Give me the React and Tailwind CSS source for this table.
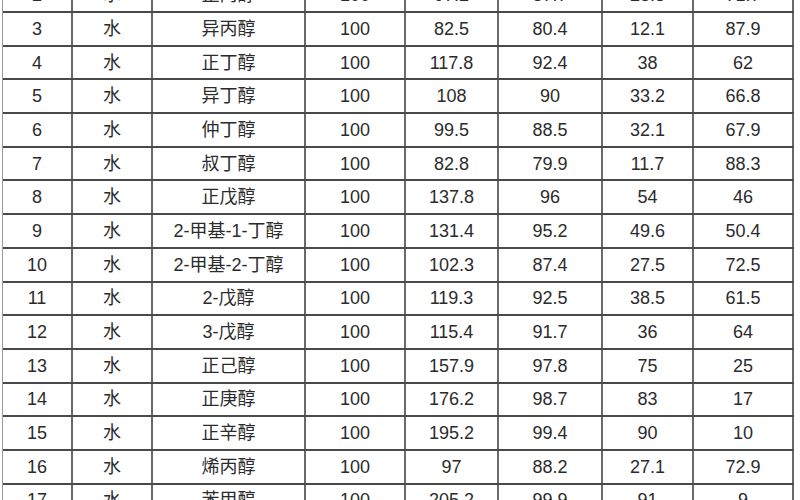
import React from 'react';

// Water azeotrope table: 水 + alcohol, columns: #, component A, component B, ... values
const ROWS = [
  ['2', '水', '正丙醇', '100', '97.2', '87.7', '28.3', '71.7'],
  ['3', '水', '异丙醇', '100', '82.5', '80.4', '12.1', '87.9'],
  ['4', '水', '正丁醇', '100', '117.8', '92.4', '38', '62'],
  ['5', '水', '异丁醇', '100', '108', '90', '33.2', '66.8'],
  ['6', '水', '仲丁醇', '100', '99.5', '88.5', '32.1', '67.9'],
  ['7', '水', '叔丁醇', '100', '82.8', '79.9', '11.7', '88.3'],
  ['8', '水', '正戊醇', '100', '137.8', '96', '54', '46'],
  ['9', '水', '2-甲基-1-丁醇', '100', '131.4', '95.2', '49.6', '50.4'],
  ['10', '水', '2-甲基-2-丁醇', '100', '102.3', '87.4', '27.5', '72.5'],
  ['11', '水', '2-戊醇', '100', '119.3', '92.5', '38.5', '61.5'],
  ['12', '水', '3-戊醇', '100', '115.4', '91.7', '36', '64'],
  ['13', '水', '正己醇', '100', '157.9', '97.8', '75', '25'],
  ['14', '水', '正庚醇', '100', '176.2', '98.7', '83', '17'],
  ['15', '水', '正辛醇', '100', '195.2', '99.4', '90', '10'],
  ['16', '水', '烯丙醇', '100', '97', '88.2', '27.1', '72.9'],
  ['17', '水', '苯甲醇', '100', '205.2', '99.9', '91', '9'],
];

export default function App() {
  return (
    <div className="w-[800px] h-[500px] overflow-hidden bg-white">
      <div
        className="-mt-[20.7px] ml-[2px] w-[792px] border-l border-[#9a9a9a] text-[18px] text-[#2b2b2b]"
        style={{ fontFamily: '"Liberation Sans", "Noto Sans CJK SC", sans-serif' }}
      >
        {ROWS.map((r) => (
          <div
            key={r[0]}
            className="grid grid-cols-[70px_80px_153px_100px_93px_104px_91px_100px] h-[33.7px] border-b-2 border-[#4a4a4a]"
          >
            {r.map((c, i) => (
              <div key={i} className="flex items-center justify-center border-r-2 border-[#6a6a6a] leading-none">
                {c}
              </div>
            ))}
          </div>
        ))}
      </div>
    </div>
  );
}
